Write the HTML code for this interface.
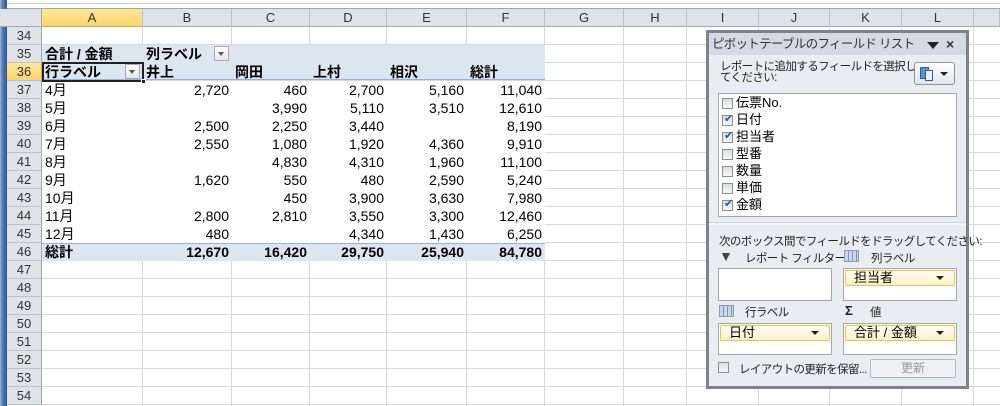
<!DOCTYPE html>
<html><head><meta charset="utf-8"><style>
*{margin:0;padding:0;box-sizing:border-box}
body{width:1000px;height:406px;overflow:hidden;background:#fff;font-family:"Liberation Sans","Noto Sans CJK JP",sans-serif;font-size:14px;color:#000;position:relative}
.a{position:absolute;white-space:nowrap}
.vl{position:absolute;top:27px;height:379px;width:1px;background:#d8d8d8}
.hl{position:absolute;left:42px;width:958px;height:1px;background:#d8d8d8}
.ch{position:absolute;top:9px;height:18px;background:#dfe3e8;border-right:1px solid #b9c2cc;border-bottom:1px solid #9eaab8;text-align:center;line-height:17px;font-size:13px;color:#333}
.rh{position:absolute;left:7px;width:35px;height:18px;background:#dfe3e8;border-bottom:1px solid #b9c2cc;border-right:1px solid #9eaab8;text-align:center;line-height:18px;font-size:13px;color:#333}
.c{position:absolute;height:18px;line-height:18px;white-space:nowrap}
.r{text-align:right}
.b{font-weight:bold}
.cb{position:absolute;width:11px;height:11px;border:1px solid #8a8f96;background:linear-gradient(#dcdcdc,#f8f8f8)}
.fld{position:absolute;left:4px;height:14px;line-height:14px;font-size:13px}
.chip{position:absolute;height:16px;border:1px solid #f2c14c;background:linear-gradient(#fffdf4,#fff1c8);font-size:13px;line-height:14px;padding-left:8px;border-radius:2px}
.chip:after{content:"";position:absolute;right:10px;top:5px;border-left:4px solid transparent;border-right:4px solid transparent;border-top:4px solid #222}
.box{position:absolute;background:#fff;border:1px solid #a3a8ae}
.p{font-size:11.5px;letter-spacing:-0.6px;color:#222}
</style></head><body>
<div class="a" style="left:0;top:0;width:1000px;height:9px;background:#fff;border-bottom:1px solid #9da6b0"></div>
<div class="a" style="left:0;top:3px;width:1000px;height:1px;background:#c8ccd2"></div>
<div class="a" style="left:0;top:0;width:7px;height:406px;background:linear-gradient(90deg,#9db4d6,#4e79b8 40%,#2d5a9c)"></div>
<div class="a" style="left:0;top:9px;width:42px;height:18px;background:#dfe3e8;border-right:1px solid #9eaab8;border-bottom:1px solid #9eaab8"></div>
<div class="ch" style="left:42px;width:101px;background:linear-gradient(#fde99a,#f9d468);border-bottom:1px solid #e0a43c">A</div>
<div class="ch" style="left:143px;width:89px">B</div>
<div class="ch" style="left:232px;width:78px">C</div>
<div class="ch" style="left:310px;width:77px">D</div>
<div class="ch" style="left:387px;width:80px">E</div>
<div class="ch" style="left:467px;width:78px">F</div>
<div class="ch" style="left:545px;width:79px">G</div>
<div class="ch" style="left:624px;width:63px">H</div>
<div class="ch" style="left:687px;width:72px">I</div>
<div class="ch" style="left:759px;width:71px">J</div>
<div class="ch" style="left:830px;width:72px">K</div>
<div class="ch" style="left:902px;width:72px">L</div>
<div class="ch" style="left:974px;width:26px"></div>
<div class="vl" style="left:142px"></div><div class="vl" style="left:231px"></div><div class="vl" style="left:309px"></div><div class="vl" style="left:386px"></div><div class="vl" style="left:466px"></div><div class="vl" style="left:544px"></div><div class="vl" style="left:623px"></div><div class="vl" style="left:686px"></div><div class="vl" style="left:758px"></div><div class="vl" style="left:829px"></div><div class="vl" style="left:901px"></div><div class="vl" style="left:973px"></div>
<div class="hl" style="top:44px"></div><div class="hl" style="top:62px"></div><div class="hl" style="top:80px"></div><div class="hl" style="top:98px"></div><div class="hl" style="top:116px"></div><div class="hl" style="top:134px"></div><div class="hl" style="top:152px"></div><div class="hl" style="top:170px"></div><div class="hl" style="top:188px"></div><div class="hl" style="top:206px"></div><div class="hl" style="top:224px"></div><div class="hl" style="top:242px"></div><div class="hl" style="top:260px"></div><div class="hl" style="top:278px"></div><div class="hl" style="top:296px"></div><div class="hl" style="top:314px"></div><div class="hl" style="top:332px"></div><div class="hl" style="top:350px"></div><div class="hl" style="top:368px"></div><div class="hl" style="top:386px"></div><div class="hl" style="top:404px"></div>
<div class="rh" style="top:27px">34</div><div class="rh" style="top:45px">35</div>
<div class="rh" style="top:63px;background:linear-gradient(#fde99a,#f9d468);border-right:1px solid #e0a43c">36</div>
<div class="rh" style="top:81px">37</div><div class="rh" style="top:99px">38</div><div class="rh" style="top:117px">39</div><div class="rh" style="top:135px">40</div><div class="rh" style="top:153px">41</div><div class="rh" style="top:171px">42</div><div class="rh" style="top:189px">43</div><div class="rh" style="top:207px">44</div><div class="rh" style="top:225px">45</div><div class="rh" style="top:243px">46</div><div class="rh" style="top:261px">47</div><div class="rh" style="top:279px">48</div><div class="rh" style="top:297px">49</div><div class="rh" style="top:315px">50</div><div class="rh" style="top:333px">51</div><div class="rh" style="top:351px">52</div><div class="rh" style="top:369px">53</div><div class="rh" style="top:387px">54</div>
<div class="a" style="left:42px;top:45px;width:503px;height:35px;background:#dce6f1;border-bottom:1px solid #95b3d7"></div>
<div class="a" style="left:42px;top:81px;width:503px;height:162px;background:#fff"></div>
<div class="a" style="left:42px;top:243px;width:503px;height:18px;background:#dce6f1;border-top:1px solid #95b3d7"></div>
<div class="c b" style="left:45px;top:45px">合計 / 金額</div>
<div class="c b" style="left:146px;top:45px">列ラベル</div>
<div class="a" style="left:214px;top:46px;width:15px;height:15px;border:1px solid #a8acb2;background:linear-gradient(#fff,#e4e6e9)"></div>
<div class="a" style="left:218px;top:52px;border-left:3.5px solid transparent;border-right:3.5px solid transparent;border-top:4px solid #555"></div>
<div class="a" style="left:42px;top:62px;width:102px;height:20px;border:2px solid #222"></div>
<div class="a" style="left:141px;top:79px;width:5px;height:5px;background:#222;border:1px solid #fff"></div>
<div class="c b" style="left:45px;top:63px">行ラベル</div>
<div class="a" style="left:125px;top:64px;width:15px;height:15px;border:1px solid #a8acb2;background:linear-gradient(#fff,#e4e6e9)"></div>
<div class="a" style="left:129px;top:70px;border-left:3.5px solid transparent;border-right:3.5px solid transparent;border-top:4px solid #555"></div>
<div class="c b" style="left:146px;top:63px">井上</div><div class="c b" style="left:235px;top:63px">岡田</div><div class="c b" style="left:313px;top:63px">上村</div><div class="c b" style="left:390px;top:63px">相沢</div><div class="c b" style="left:470px;top:63px">総計</div>
<div class="c" style="left:45px;top:81px">4月</div><div class="c r" style="left:143px;width:86px;top:81px">2,720</div><div class="c r" style="left:232px;width:75px;top:81px">460</div><div class="c r" style="left:310px;width:74px;top:81px">2,700</div><div class="c r" style="left:387px;width:77px;top:81px">5,160</div><div class="c r" style="left:467px;width:75px;top:81px">11,040</div>
<div class="c" style="left:45px;top:99px">5月</div><div class="c r" style="left:232px;width:75px;top:99px">3,990</div><div class="c r" style="left:310px;width:74px;top:99px">5,110</div><div class="c r" style="left:387px;width:77px;top:99px">3,510</div><div class="c r" style="left:467px;width:75px;top:99px">12,610</div>
<div class="c" style="left:45px;top:117px">6月</div><div class="c r" style="left:143px;width:86px;top:117px">2,500</div><div class="c r" style="left:232px;width:75px;top:117px">2,250</div><div class="c r" style="left:310px;width:74px;top:117px">3,440</div><div class="c r" style="left:467px;width:75px;top:117px">8,190</div>
<div class="c" style="left:45px;top:135px">7月</div><div class="c r" style="left:143px;width:86px;top:135px">2,550</div><div class="c r" style="left:232px;width:75px;top:135px">1,080</div><div class="c r" style="left:310px;width:74px;top:135px">1,920</div><div class="c r" style="left:387px;width:77px;top:135px">4,360</div><div class="c r" style="left:467px;width:75px;top:135px">9,910</div>
<div class="c" style="left:45px;top:153px">8月</div><div class="c r" style="left:232px;width:75px;top:153px">4,830</div><div class="c r" style="left:310px;width:74px;top:153px">4,310</div><div class="c r" style="left:387px;width:77px;top:153px">1,960</div><div class="c r" style="left:467px;width:75px;top:153px">11,100</div>
<div class="c" style="left:45px;top:171px">9月</div><div class="c r" style="left:143px;width:86px;top:171px">1,620</div><div class="c r" style="left:232px;width:75px;top:171px">550</div><div class="c r" style="left:310px;width:74px;top:171px">480</div><div class="c r" style="left:387px;width:77px;top:171px">2,590</div><div class="c r" style="left:467px;width:75px;top:171px">5,240</div>
<div class="c" style="left:45px;top:189px">10月</div><div class="c r" style="left:232px;width:75px;top:189px">450</div><div class="c r" style="left:310px;width:74px;top:189px">3,900</div><div class="c r" style="left:387px;width:77px;top:189px">3,630</div><div class="c r" style="left:467px;width:75px;top:189px">7,980</div>
<div class="c" style="left:45px;top:207px">11月</div><div class="c r" style="left:143px;width:86px;top:207px">2,800</div><div class="c r" style="left:232px;width:75px;top:207px">2,810</div><div class="c r" style="left:310px;width:74px;top:207px">3,550</div><div class="c r" style="left:387px;width:77px;top:207px">3,300</div><div class="c r" style="left:467px;width:75px;top:207px">12,460</div>
<div class="c" style="left:45px;top:225px">12月</div><div class="c r" style="left:143px;width:86px;top:225px">480</div><div class="c r" style="left:310px;width:74px;top:225px">4,340</div><div class="c r" style="left:387px;width:77px;top:225px">1,430</div><div class="c r" style="left:467px;width:75px;top:225px">6,250</div>
<div class="c b" style="left:45px;top:243px">総計</div><div class="c r b" style="left:143px;width:86px;top:243px">12,670</div><div class="c r b" style="left:232px;width:75px;top:243px">16,420</div><div class="c r b" style="left:310px;width:74px;top:243px">29,750</div><div class="c r b" style="left:387px;width:77px;top:243px">25,940</div><div class="c r b" style="left:467px;width:75px;top:243px">84,780</div>
<!-- panel -->
<div class="a" style="left:706px;top:30px;width:263px;height:359px;border:3px solid #7d838b;background:#e9edf2"></div>
<div class="a" style="left:709px;top:33px;width:257px;height:22px;background:#d3dae3;font-size:12.5px;letter-spacing:-0.7px;line-height:22px;padding-left:3px;color:#333">ピボットテーブルのフィールド リスト</div>
<div class="a" style="left:927px;top:42px;border-left:6px solid transparent;border-right:6px solid transparent;border-top:7px solid #222"></div>
<div class="a" style="left:946px;top:36px;font-size:14px;font-weight:bold;color:#333">×</div>
<div class="a p" style="left:720px;top:62px;line-height:11px">レポートに追加するフィールドを選択し<br>てください:</div>
<div class="a" style="left:914px;top:62px;width:41px;height:23px;border:1px solid #8d939a;border-radius:3px;background:linear-gradient(#fff,#e2e5ea)"></div>
<div class="a" style="left:920px;top:67px;width:9px;height:12px;background:#5b8fd0;border:1px solid #2f5f9e"></div>
<div class="a" style="left:925px;top:70px;width:8px;height:11px;background:#e8eef8;border:1px solid #2f5f9e"></div>
<div class="a" style="left:940px;top:72px;border-left:4px solid transparent;border-right:4px solid transparent;border-top:4px solid #222"></div>
<div class="box" style="left:718px;top:93px;width:239px;height:124px">
<div class="cb" style="left:3px;top:4px"></div><div class="fld" style="left:17px;top:2px">伝票No.</div>
<div class="cb" style="left:3px;top:21px"></div><div class="fld" style="left:17px;top:19px">日付</div><div class="a" style="left:5px;top:18px;color:#2a55b0;font-size:11px">✔</div>
<div class="cb" style="left:3px;top:38px"></div><div class="fld" style="left:17px;top:36px">担当者</div><div class="a" style="left:5px;top:35px;color:#2a55b0;font-size:11px">✔</div>
<div class="cb" style="left:3px;top:55px"></div><div class="fld" style="left:17px;top:53px">型番</div>
<div class="cb" style="left:3px;top:72px"></div><div class="fld" style="left:17px;top:70px">数量</div>
<div class="cb" style="left:3px;top:89px"></div><div class="fld" style="left:17px;top:87px">単価</div>
<div class="cb" style="left:3px;top:106px"></div><div class="fld" style="left:17px;top:104px">金額</div><div class="a" style="left:5px;top:103px;color:#2a55b0;font-size:11px">✔</div>
</div>
<div class="a" style="left:709px;top:222px;width:257px;height:3px;background:#f7f8fa;border-top:1px solid #d0d5dc"></div>
<div class="a p" style="left:719px;top:233px">次のボックス間でフィールドをドラッグしてください:</div>
<div class="a" style="left:719px;top:250px;font-size:14px;color:#444;line-height:12px">▼</div>
<div class="a p" style="left:745px;top:250px">レポート フィルター</div>
<div class="a" style="left:844px;top:250px;width:15px;height:12px;border:1px solid #8a9bb3;background:repeating-linear-gradient(90deg,#c9d7ea 0 3px,#7e93b5 3px 4px)"></div>
<div class="a p" style="left:871px;top:250px">列ラベル</div>
<div class="box" style="left:718px;top:268px;width:114px;height:33px"></div>
<div class="box" style="left:843px;top:268px;width:114px;height:33px"></div>
<div class="chip" style="left:845px;top:270px;width:110px">担当者</div>
<div class="a" style="left:719px;top:305px;width:15px;height:12px;border:1px solid #8a9bb3;background:repeating-linear-gradient(90deg,#c9d7ea 0 3px,#7e93b5 3px 4px)"></div>
<div class="a p" style="left:745px;top:304px">行ラベル</div>
<div class="a" style="left:845px;top:303px;font-size:13px;font-weight:bold;color:#222">Σ</div>
<div class="a p" style="left:870px;top:304px">値</div>
<div class="box" style="left:718px;top:323px;width:114px;height:32px"></div>
<div class="box" style="left:843px;top:323px;width:114px;height:32px"></div>
<div class="chip" style="left:720px;top:325px;width:110px">日付</div>
<div class="chip" style="left:845px;top:325px;width:110px">合計 / 金額</div>
<div class="cb" style="left:718px;top:362px"></div>
<div class="a p" style="left:739px;top:361px">レイアウトの更新を保留...</div>
<div class="a" style="left:870px;top:359px;width:86px;height:19px;border:1px solid #b5b9bf;border-radius:2px;background:#eef0f3;text-align:center;font-size:12px;line-height:17px;color:#999">更新</div>
</body></html>
